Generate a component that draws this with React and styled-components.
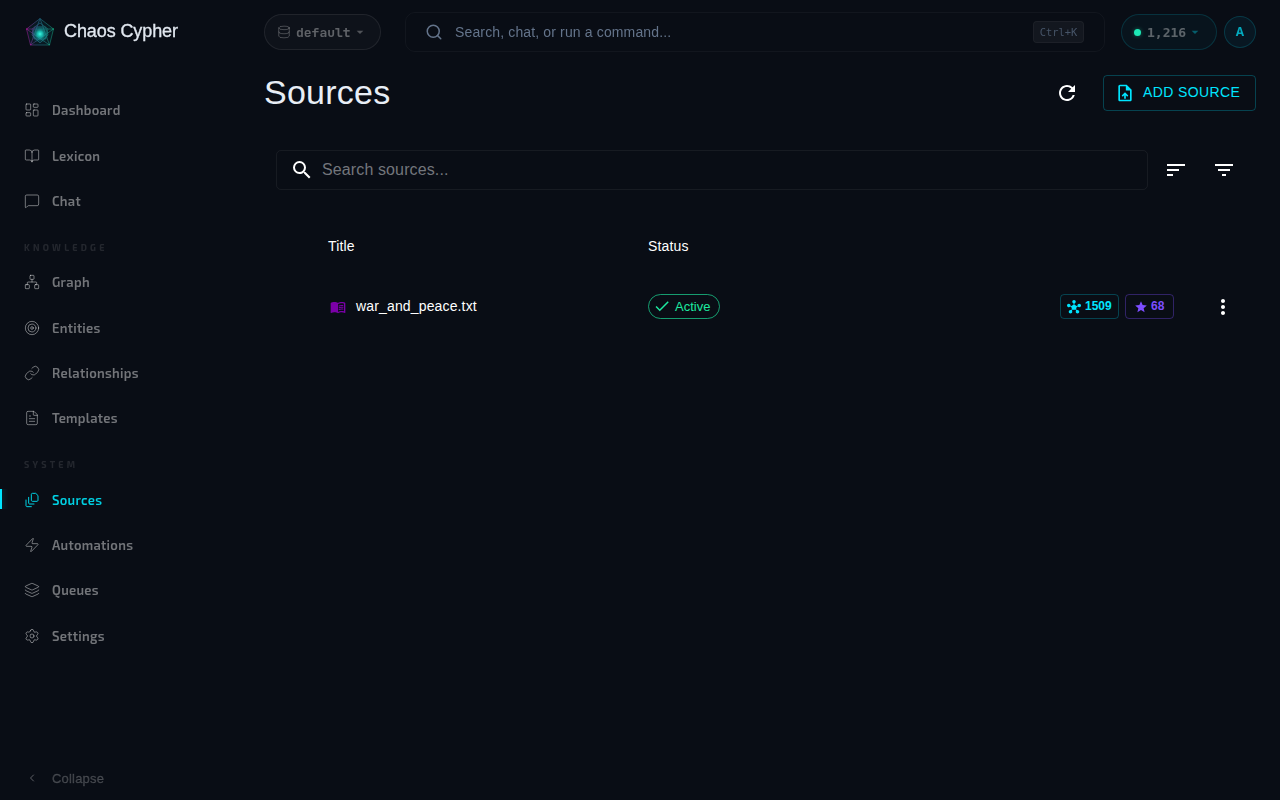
import React from 'react';
import styled, { createGlobalStyle, css } from 'styled-components';
import {
  LayoutDashboard,
  BookOpen,
  MessageSquare,
  Network,
  Target,
  Link,
  FileText,
  Zap,
  Layers,
  Settings,
  ChevronLeft,
  Database,
  Search,
} from 'lucide-react';
import {
  MdRefresh,
  MdOutlineUploadFile,
  MdSearch,
  MdSort,
  MdFilterList,
  MdMenuBook,
  MdCheck,
  MdHub,
  MdStar,
  MdMoreVert,
  MdArrowDropDown,
} from 'react-icons/md';

const GlobalStyle = createGlobalStyle`
  * {
    box-sizing: border-box;
  }
  body {
    margin: 0;
    background: #090d15;
    color: #fff;
    font-family: "Liberation Sans", Arial, sans-serif;
    overflow: hidden;
  }
  button, input {
    font: inherit;
    color: inherit;
    background: none;
    border: 0;
    padding: 0;
    margin: 0;
  }
  svg {
    display: block;
    flex-shrink: 0;
  }
`;

const Shell = styled.div`
  display: grid;
  grid-template-columns: 240px 1fr;
  height: 800px;
  width: 1280px;
`;

/* sidebar */

const Sidebar = styled.aside`
  display: flex;
  flex-direction: column;
  height: 800px;
  will-change: transform;
`;

const Brand = styled.div`
  display: flex;
  align-items: center;
  gap: 8px;
  height: 64px;
  padding-left: 24px;
  margin-bottom: 23.5px;
`;

const BrandName = styled.span`
  font-size: 18px;
  line-height: 24px;
  letter-spacing: -0.1px;
  margin-top: -3px;
  color: #e2e8f0;
  -webkit-text-stroke: 0.3px #e2e8f0;
`;

const Nav = styled.nav`
  display: flex;
  flex-direction: column;
`;

const NavItem = styled.a`
  display: flex;
  align-items: center;
  gap: 12px;
  height: 45.4px;
  padding-left: 24px;
  font-family: "Exo 2", "Noto Sans", sans-serif;
  font-size: 13px;
  font-weight: 600;
  letter-spacing: 0.3px;
  color: rgba(255, 255, 255, 0.43);

  ${props => props.$active && css`
    color: #00d0e3;
    background: linear-gradient(90deg, #00e5ff 2px, rgba(0, 229, 255, 0.07) 2px, transparent 9px) no-repeat 0 12px / 12px 20px;
  `}
`;

const NavSection = styled.div`
  height: 35.8px;
  padding: 18px 0 0 24px;
  font-family: "Exo 2", "Noto Sans", sans-serif;
  font-size: 9px;
  font-weight: 700;
  line-height: 12px;
  letter-spacing: 3.25px;
  color: rgba(255, 255, 255, 0.11);
`;

const Collapse = styled.button`
  display: flex;
  align-items: center;
  gap: 12px;
  height: 44px;
  padding-left: 24px;
  margin-top: auto;
  font-size: 13px;
  letter-spacing: 0.2px;
  color: rgba(255, 255, 255, 0.2);
  -webkit-text-stroke: 0.3px rgba(255, 255, 255, 0.15);

  svg {
    margin: 0 2px;
    color: rgba(255, 255, 255, 0.35);
  }
`;

/* top bar */

const Main = styled.div`
  display: flex;
  flex-direction: column;
  padding: 0 24px;
`;

const TopBar = styled.header`
  display: flex;
  align-items: center;
  height: 64px;
  will-change: transform;
`;

const Pill = styled.button`
  display: flex;
  align-items: center;
  height: 36px;
  border-radius: 18px;
  font-family: "JetBrains Mono", "DejaVu Sans Mono", monospace;
  font-size: 13px;
  font-weight: 600;
  color: rgba(255, 255, 255, 0.34);
`;

const DatabasePill = styled(Pill)`
  width: 117px;
  padding-left: 12px;
  border: 1px solid rgba(255, 255, 255, 0.08);
  background: rgba(255, 255, 255, 0.025);

  span {
    margin: 0 1px 0 5px;
  }
  svg {
    opacity: 0.8;
  }
`;

const CreditsPill = styled(Pill)`
  width: 96px;
  padding-left: 12px;
  margin-left: 16px;
  font-family: "DejaVu Sans Mono", monospace;
  border: 1px solid rgba(0, 229, 255, 0.15);
  background: rgba(0, 229, 255, 0.035);

  span {
    margin: 0 1px 0 6px;
  }
  svg {
    color: rgba(0, 229, 255, 0.35);
  }
`;

const Dot = styled.i`
  width: 7px;
  height: 7px;
  border-radius: 50%;
  background: #1de9b6;
  box-shadow: 0 0 4px rgba(29, 233, 182, 0.4);
`;

const CommandBar = styled.div`
  display: flex;
  align-items: center;
  width: 700px;
  height: 40px;
  margin-left: 24px;
  padding: 0 20px 0 19px;
  border: 1px solid rgba(255, 255, 255, 0.04);
  border-radius: 10px;
  font-size: 14px;
  letter-spacing: 0.14px;
  color: #64748b;

  svg {
    margin-right: 12px;
  }
`;

const Kbd = styled.kbd`
  width: 51px;
  height: 22px;
  margin-left: auto;
  border: 1px solid rgba(255, 255, 255, 0.045);
  border-radius: 4px;
  background: rgba(255, 255, 255, 0.045);
  font-family: "DejaVu Sans Mono", monospace;
  font-size: 10.4px;
  line-height: 20px;
  letter-spacing: 0;
  text-align: center;
  color: #475569;
`;

const Avatar = styled.div`
  width: 32px;
  height: 32px;
  margin-left: 7px;
  border: 1px solid rgba(0, 229, 255, 0.17);
  border-radius: 50%;
  background: rgba(0, 180, 255, 0.06);
  font-family: "Noto Sans", sans-serif;
  font-size: 12px;
  font-weight: 700;
  line-height: 30px;
  text-align: center;
  color: #03a9bd;
`;

/* page */

const PageHead = styled.div`
  display: flex;
  align-items: center;
  height: 57px;
`;

const Title = styled.h1`
  margin: 0 auto 2px 0;
  font-size: 34px;
  font-weight: 400;
  line-height: 42px;
  letter-spacing: 0.25px;
  color: #e8eef6;
`;

const AddButton = styled.button`
  display: flex;
  align-items: center;
  gap: 8px;
  width: 153px;
  height: 36px;
  margin-left: 24px;
  padding-left: 11px;
  border: 1px solid rgba(0, 229, 255, 0.25);
  border-radius: 4px;
  font-size: 14px;
  letter-spacing: 0.4px;
  color: #00e5ff;

  span {
    margin-bottom: 2px;
  }
`;

const FilterBar = styled.div`
  display: flex;
  align-items: center;
  margin-top: 29px;
  padding: 0 12px;
`;

const SearchField = styled.label`
  display: flex;
  align-items: center;
  gap: 8px;
  width: 872px;
  height: 40px;
  margin-right: 16px;
  padding-left: 13px;
  border: 1px solid rgba(255, 255, 255, 0.06);
  border-radius: 5px;
`;

const SearchInput = styled.input`
  flex: 1;
  height: 36px;
  font-size: 16px;
  letter-spacing: 0.12px;
  outline: none;

  &::placeholder {
    color: #73767c;
    opacity: 1;
  }
`;

const IconButton = styled.button`
  display: flex;
  margin-right: ${props => props.$gap || 0}px;
`;

const Row = styled.div`
  display: grid;
  grid-template-columns: 320px 1fr auto;
  align-items: center;
  height: ${props => props.$height}px;
  padding: 0 21px 0 64px;
  font-size: 14px;
  letter-spacing: 0.15px;
`;

const TableHead = styled(Row)`
  margin-top: 27px;
`;

const FileCell = styled.div`
  display: flex;
  align-items: center;
  gap: 10px;

  svg {
    margin: 2px 0 0 2px;
    color: #7b00a8;
  }
`;

const StatusChip = styled.span`
  display: flex;
  align-items: center;
  gap: 4px;
  width: 72px;
  height: 25px;
  padding-left: 4px;
  border: 1px solid rgba(29, 233, 160, 0.65);
  border-radius: 13px;
  font-size: 13px;
  letter-spacing: 0;
  color: #1de9a0;
`;

const RowEnd = styled.div`
  display: flex;
  align-items: center;
`;

const CountChip = styled.span`
  display: flex;
  align-items: center;
  gap: ${props => props.$gap}px;
  width: ${props => props.$width}px;
  height: 25px;
  margin-right: 6px;
  padding-left: ${props => props.$pad}px;
  border: 1px solid ${props => props.$border};
  border-radius: 4px;
  font-size: 12px;
  font-weight: 700;
  letter-spacing: 0;
  color: ${props => props.$color};

  svg {
    margin-top: 1px;
  }
`;

const MoreButton = styled(IconButton)`
  margin: 1px 0 0 31px;
`;

function Logo() {
  return (
    <svg width="32" height="32" viewBox="0 0 32 32" fill="none">
      <defs>
        <radialGradient id="core">
          <stop offset="0" stopColor="#3dfbe4" />
          <stop offset="0.3" stopColor="#1bd3c5" stopOpacity="0.85" />
          <stop offset="0.65" stopColor="#129f9d" stopOpacity="0.4" />
          <stop offset="1" stopColor="#129f9d" stopOpacity="0" />
        </radialGradient>
        <linearGradient id="edge" x1="2" y1="16" x2="30" y2="16" gradientUnits="userSpaceOnUse">
          <stop offset="0" stopColor="#a3118f" />
          <stop offset="0.45" stopColor="#256b8c" />
          <stop offset="1" stopColor="#139873" />
        </linearGradient>
      </defs>
      <path d="M16 2.5 29.5 13 25.5 29H6.5L2.5 13Z" fill="#10616b" fillOpacity="0.15" />
      <g stroke="url(#edge)" strokeWidth="0.7" opacity="0.85">
        <path d="M16 2.5 29.5 13 25.5 29H6.5L2.5 13Z" />
        <path d="M16 2.5 6.5 29 29.5 13 2.5 13.01 25.5 29Z" />
        <path d="M16 7 24 13 21.5 23H10.5L8 13Z" />
        <path d="M16 27 8 19 10.5 11H21.5L24 19Z" />
      </g>
      <circle cx="16" cy="18" r="9" fill="url(#core)" />
      <g fill="#a01890">
        <circle cx="2.9" cy="13" r="0.7" />
        <circle cx="6.8" cy="28.6" r="0.7" />
      </g>
      <g fill="#18a780">
        <circle cx="29.1" cy="13" r="0.7" />
        <circle cx="25.2" cy="28.6" r="0.7" />
      </g>
    </svg>
  );
}

function SourcesIcon({ size, strokeWidth }) {
  return (
    <svg
      width={size}
      height={size}
      viewBox="0 0 24 24"
      fill="none"
      stroke="currentColor"
      strokeWidth={strokeWidth}
      strokeLinecap="round"
      strokeLinejoin="round"
    >
      <path d="M21 6v6.5c0 .8-.7 1.5-1.5 1.5h-7c-.8 0-1.5-.7-1.5-1.5v-9c0-.8.7-1.5 1.5-1.5H17Z" />
      <path d="M7 8v8.8c0 .3.2.6.4.8.2.2.5.4.8.4H15" />
      <path d="M3 12v8.8c0 .3.2.6.4.8.2.2.5.4.8.4H11" />
    </svg>
  );
}

const mainItems = [
  { label: 'Dashboard', icon: LayoutDashboard },
  { label: 'Lexicon', icon: BookOpen },
  { label: 'Chat', icon: MessageSquare },
];

const knowledgeItems = [
  { label: 'Graph', icon: Network },
  { label: 'Entities', icon: Target },
  { label: 'Relationships', icon: Link },
  { label: 'Templates', icon: FileText },
];

const systemItems = [
  { label: 'Sources', icon: SourcesIcon, active: true },
  { label: 'Automations', icon: Zap },
  { label: 'Queues', icon: Layers },
  { label: 'Settings', icon: Settings },
];

function NavGroup({ items }) {
  return items.map(({ label, icon: Icon, active }) => (
    <NavItem key={label} $active={active}>
      <Icon size={16} strokeWidth={1.5} />
      {label}
    </NavItem>
  ));
}

function App() {
  return (
    <>
      <GlobalStyle />
      <Shell>
        <Sidebar>
          <Brand>
            <Logo />
            <BrandName>Chaos Cypher</BrandName>
          </Brand>
          <Nav>
            <NavGroup items={mainItems} />
            <NavSection>KNOWLEDGE</NavSection>
            <NavGroup items={knowledgeItems} />
            <NavSection>SYSTEM</NavSection>
            <NavGroup items={systemItems} />
          </Nav>
          <Collapse>
            <ChevronLeft size={12} strokeWidth={2} />
            Collapse
          </Collapse>
        </Sidebar>
        <Main>
          <TopBar>
            <DatabasePill>
              <Database size={14} strokeWidth={1.5} />
              <span>default</span>
              <MdArrowDropDown size={16} />
            </DatabasePill>
            <CommandBar>
              <Search size={18} strokeWidth={2} />
              Search, chat, or run a command...
              <Kbd>Ctrl+K</Kbd>
            </CommandBar>
            <CreditsPill>
              <Dot />
              <span>1,216</span>
              <MdArrowDropDown size={16} />
            </CreditsPill>
            <Avatar>A</Avatar>
          </TopBar>
          <PageHead>
            <Title>Sources</Title>
            <IconButton><MdRefresh size={24} /></IconButton>
            <AddButton>
              <MdOutlineUploadFile size={20} />
              <span>ADD SOURCE</span>
            </AddButton>
          </PageHead>
          <FilterBar>
            <SearchField>
              <MdSearch size={24} />
              <SearchInput placeholder="Search sources..." />
            </SearchField>
            <IconButton $gap={24}><MdSort size={24} /></IconButton>
            <IconButton><MdFilterList size={24} /></IconButton>
          </FilterBar>
          <TableHead $height={57}>
            <span>Title</span>
            <span>Status</span>
          </TableHead>
          <Row $height={64}>
            <FileCell>
              <MdMenuBook size={16} />
              war_and_peace.txt
            </FileCell>
            <StatusChip>
              <MdCheck size={18} />
              <span>Active</span>
            </StatusChip>
            <RowEnd>
              <CountChip $width={59} $pad={6} $gap={4} $color="#00e5ff" $border="rgba(0, 229, 255, 0.25)">
                <MdHub size={14} />
                1509
              </CountChip>
              <CountChip $width={49} $pad={8} $gap={3} $color="#7c4dff" $border="rgba(124, 77, 255, 0.35)">
                <MdStar size={14} />
                68
              </CountChip>
              <MoreButton><MdMoreVert size={24} /></MoreButton>
            </RowEnd>
          </Row>
        </Main>
      </Shell>
    </>
  );
}

export default App;
